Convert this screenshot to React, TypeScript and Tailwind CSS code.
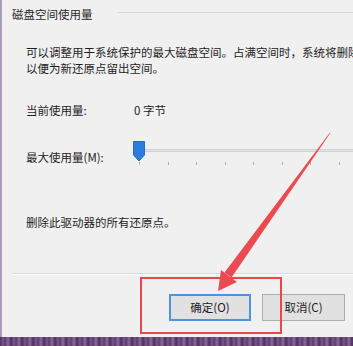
import React from "react";

const font = { fontFamily: '"Noto Sans CJK SC", "Microsoft YaHei", "Noto Sans", sans-serif' };

export default function App() {
  const ticks = [139, 168, 196, 225, 253, 282, 310, 339];
  return (
    <div className="relative w-[353px] h-[346px] overflow-hidden bg-[#5b3d6b]" style={font}>
      <div className="flex flex-col h-[337px] bg-[#f0f0f0] border-l-2 border-[#a99db5] text-[#1e1e1e]">
        {/* group title */}
        <div className="flex items-center h-[16px] mt-[6px] pl-[10px]">
          <span className="text-[11.5px] leading-[16px] text-[#2a2a2a] whitespace-nowrap">磁盘空间使用量</span>
          <div className="flex-1 ml-[25px] h-[2px] border-t border-[#d5d5d5] border-b-white mt-[-2px]" />
        </div>
        {/* paragraph */}
        <div className="mt-[22px] pl-[24px] text-[11.5px] leading-[16px] whitespace-nowrap overflow-hidden">
          <div>可以调整用于系统保护的最大磁盘空间。占满空间时，系统将删除</div>
          <div>以便为新还原点留出空间。</div>
        </div>
        {/* current usage */}
        <div className="mt-[26px] pl-[24px] flex text-[11.5px] leading-[16px]">
          <span className="w-[108px]">当前使用量:</span>
          <span>0 字节</span>
        </div>
        {/* max usage with slider */}
        <div className="mt-[25px] pl-[24px] flex items-start h-[26px]">
          <span className="text-[11.5px] leading-[16px] mt-[6px] w-[107px] whitespace-nowrap">最大使用量(M):</span>
          <div className="relative flex-1 h-[26px]">
            <div className="absolute left-[10px] right-0 top-[6px] h-[3px] bg-[#e4e4e4] border-y border-[#d2d2d2]" />
            {ticks.map((t) => (
              <div key={t} className="absolute w-px h-[3px] bg-[#b0b0b0] top-[19px]" style={{ left: t - 133 }} />
            ))}
            <svg className="absolute left-0 top-[-2px]" width="12" height="21" viewBox="0 0 12 21">
              <path d="M0.5 0.5 H11.5 V14 L6 20 L0.5 14 Z" fill="#2c7cd9" stroke="#1f6dc6" />
            </svg>
          </div>
        </div>
        {/* delete text */}
        <div className="mt-[45px] pl-[24px] text-[11.5px] leading-[16px]">删除此驱动器的所有还原点。</div>
        {/* separator */}
        <div className="mt-[43px] ml-[11px] h-[2px] border-t border-[#d7d7d7] border-b border-b-white" />
        {/* buttons */}
        <div className="mt-[19px] flex pl-[167px] gap-[11px]">
          <div className="w-[82px] h-[27px] flex items-center justify-center bg-[#e1e1e1] border-2 border-[#4a95de] text-[11.5px] text-[#1e1e1e]">
            确定(O)
          </div>
          <div className="w-[83px] h-[27px] flex items-center justify-center bg-[#e1e1e1] border border-[#adadad] text-[11.5px] text-[#1e1e1e]">
            取消(C)
          </div>
        </div>
      </div>
      {/* bottom textured strip */}
      <div className="h-[9px] bg-[repeating-linear-gradient(90deg,#4a2e5a_0px,#7a5a8c_3px,#5b3b6d_5px,#8a6c9a_8px,#4d3160_11px)]" />

      {/* annotations */}
      <svg className="absolute left-0 top-0 pointer-events-none" width="353" height="346" viewBox="0 0 353 346">
        <rect x="141" y="278" width="140" height="55" fill="none" stroke="#e9474d" strokeWidth="2" />
        <polygon points="330.2,133.2 329.8,132.8 224.5,272.5 231.5,277.5" fill="#ea4a50" />
        <polygon points="218,291 221,270 237,282" fill="#ea4a50" />
      </svg>
    </div>
  );
}
